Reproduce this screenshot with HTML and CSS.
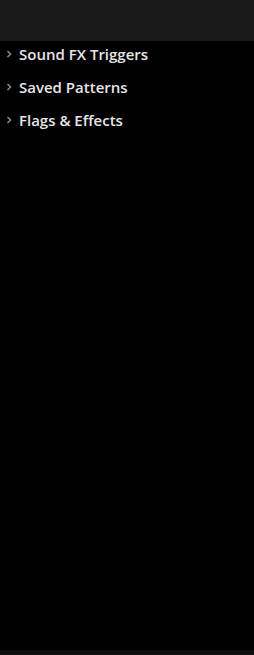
FILE: index.html
```html
<!doctype html>
<html>
	<head>
		<title>Sidebar</title>
		<link rel="stylesheet" href="styles.css">
	</head>
	<body>
		<div class="panel">
			<div class="topbar"></div>
			<ul class="tree">
				<li class="tree-item">
					<svg class="caret" width="6" height="8" viewBox="0 0 6 8"><path d="M1.5 1 L4.5 4 L1.5 7" fill="none" stroke="#8a8a8a" stroke-width="1.5"/></svg>
					Sound FX Triggers
				</li>
				<li class="tree-item">
					<svg class="caret" width="6" height="8" viewBox="0 0 6 8"><path d="M1.5 1 L4.5 4 L1.5 7" fill="none" stroke="#8a8a8a" stroke-width="1.5"/></svg>
					Saved Patterns
				</li>
				<li class="tree-item">
					<svg class="caret" width="6" height="8" viewBox="0 0 6 8"><path d="M1.5 1 L4.5 4 L1.5 7" fill="none" stroke="#8a8a8a" stroke-width="1.5"/></svg>
					Flags &amp; Effects
				</li>
			</ul>
			<div class="footer"></div>
		</div>
	</body>
</html>
```

FILE: styles.css
```css
body {
	margin: 0;
	background-color: #000;
	font-family: "Open Sans", "DejaVu Sans", sans-serif;
	color: #e6e6e6;
}

.panel {
	display: flex;
	flex-direction: column;
	height: 655px;
}

.topbar {
	height: 41px;
	background-color: #1a1a1a;
	flex-shrink: 0;
}

.tree {
	list-style: none;
	margin: 0;
	padding: 0;
	flex: 1;
	display: flex;
	flex-direction: column;
	gap: 7px;
}

.tree-item {
	display: flex;
	align-items: center;
	gap: 7px;
	height: 26px;
	padding-left: 6px;
	font-size: 15px;
	font-weight: 600;
	cursor: pointer;
}

.caret {
	flex-shrink: 0;
}

.footer {
	height: 5px;
	background-color: #0e0e0e;
	flex-shrink: 0;
}
```
